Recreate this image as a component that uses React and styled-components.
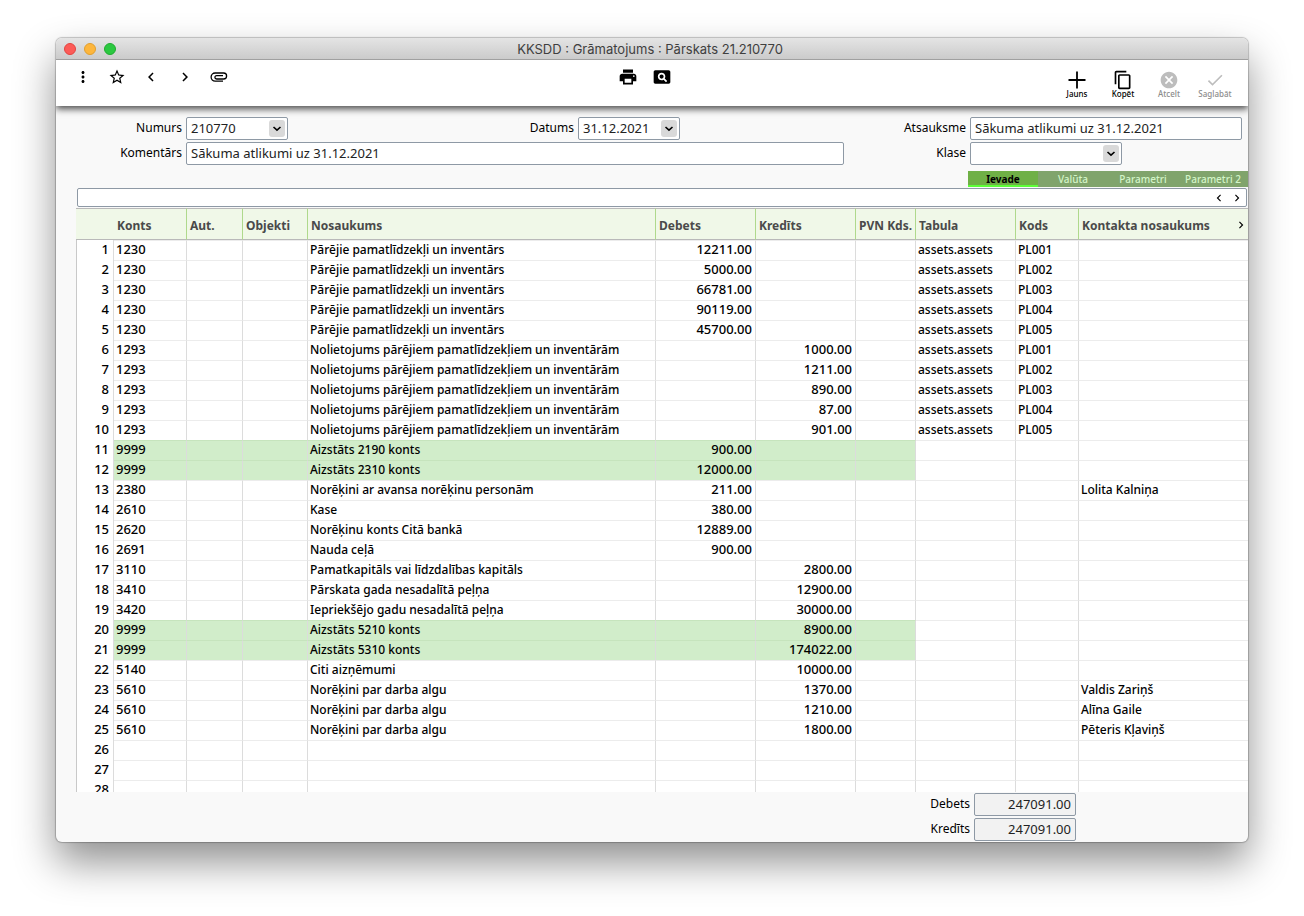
import React from "react";
import styled, { createGlobalStyle } from "styled-components";
import {
  MdMoreVert,
  MdStarBorder,
  MdChevronLeft,
  MdChevronRight,
  MdPrint,
  MdPageview,
  MdContentCopy,
  MdCancel,
  MdCheck,
} from "react-icons/md";

const Global = createGlobalStyle`
  * { box-sizing: border-box; }
  body { margin: 0; background: #fff; color: #000; }
  body, button, input, select { font-family: "Noto Sans", "Open Sans", sans-serif; font-size: 12px; }
`;

const Desktop = styled.div`
  height: 100vh;
  min-height: 480px;
  min-width: 1200px;
  padding: 38px 56px 74px;
  display: flex;
  overflow: hidden;
`;

const Window = styled.main`
  flex: 1;
  min-width: 0;
  display: flex;
  flex-direction: column;
  background: #f9f9f9;
  border-radius: 6px;
  overflow: hidden;
  box-shadow: 0 0 1px 1px rgba(0, 0, 0, 0.22), 0 20px 40px rgba(0, 0, 0, 0.44);
`;

const TitleBar = styled.header`
  flex: none;
  position: relative;
  z-index: 2;
  height: 22px;
  display: grid;
  grid-template-columns: 60px 1fr 72px;
  align-items: center;
  padding-left: 8px;
  background: linear-gradient(#e4e4e4, #cbcbcb);
  border-bottom: 1px solid #a0a0a0;
`;

const Lights = styled.div`
  display: flex;
  gap: 8px;
`;

const Light = styled.button`
  width: 12px;
  height: 12px;
  padding: 0;
  border-radius: 50%;
  border: 1px solid ${(p) => p.$edge};
  background: ${(p) => p.$fill};
`;

const Title = styled.h1`
  margin: 0;
  text-align: center;
  font: 400 13px/20px Inter, Roboto, sans-serif;
  color: #3f3f3f;
`;

const Toolbar = styled.nav`
  flex: none;
  position: relative;
  height: 46px;
  display: grid;
  grid-template-columns: 1fr auto 1fr;
  align-items: start;
  padding: 8px 10px 0 18px;
  background: #fff;
  box-shadow: 0 3px 7px rgba(0, 0, 0, 0.7);
`;

const ToolGroup = styled.div`
  display: flex;
  gap: 16px;
`;

const PrintGroup = styled(ToolGroup)`
  padding-right: 22px;
`;

const ActionGroup = styled(ToolGroup)`
  gap: 0;
  justify-content: flex-end;
  padding-top: 2px;
`;

const IconButton = styled.button`
  width: 18px;
  height: 18px;
  padding: 0;
  border: 0;
  background: none;
  display: flex;
  align-items: center;
  justify-content: center;
  color: #000;
  svg { flex: none; }
`;

const ActionButton = styled.button`
  width: 46px;
  padding: 0;
  border: 0;
  background: none;
  display: flex;
  flex-direction: column;
  align-items: center;
  color: ${(p) => (p.disabled ? "#8c8c8c" : "#000")};
  font-size: 8px;
  font-weight: 500;
  line-height: 8px;
  svg { color: ${(p) => (p.disabled ? "#bdbdbd" : "#000")}; }
`;

const Glyph = styled.span`
  height: 20px;
  display: flex;
  align-items: center;
`;

const Form = styled.form`
  flex: none;
  display: grid;
  grid-template-columns: 126px minmax(0, 1fr) 118px 272px;
  gap: 2px 4px;
  padding: 11px 6px 6px 0;
`;

const Label = styled.label`
  text-align: right;
  line-height: 21px;
`;

const Pair = styled.div`
  display: flex;
  gap: 4px;
  justify-content: space-between;
  padding-right: 164px;
`;

const Group = styled.div`
  display: flex;
  gap: 4px;
`;

const Field = styled.input`
  width: 100%;
  height: 23px;
  padding: 0 4px 2px;
  border: 1px solid #8e99a5;
  border-radius: 2px;
  background: ${(p) => (p.readOnly ? "#f2f2f2" : "#fff")};
  color: #222;
  font-size: 13px;
  text-align: ${(p) => p.$align || "left"};
`;

const ComboBox = styled.div`
  position: relative;
  width: ${(p) => p.$width};
  height: 23px;
`;

const Select = styled.select`
  appearance: none;
  width: 100%;
  height: 23px;
  padding: 0 20px 2px 4px;
  border: 1px solid #8e99a5;
  border-radius: 2px;
  background: #fff;
  color: #222;
  font-size: 13px;
`;

const ComboArrow = styled.span`
  position: absolute;
  top: 3px;
  right: 3px;
  width: 16px;
  height: 17px;
  display: flex;
  align-items: center;
  justify-content: center;
  border-radius: 3px;
  background: #d9d9d9;
  pointer-events: none;
`;

const Tabs = styled.div`
  flex: none;
  display: flex;
  justify-content: flex-end;
`;

const Tab = styled.button`
  width: 70px;
  height: 16px;
  padding: 2px 0 0;
  border: 0;
  border-bottom: 2px solid ${(p) => (p.$active ? "#5cff38" : "#80a46c")};
  background: ${(p) => (p.$active ? "#6fb046" : "#80a46c")};
  color: ${(p) => (p.$active ? "#000" : "#d3f5c8")};
  font-size: 10px;
  font-weight: ${(p) => (p.$active ? 700 : 500)};
  line-height: 12px;
  white-space: nowrap;
`;

const ScrollStrip = styled.div`
  flex: none;
  height: 19px;
  margin: 1px 1px 1px 21px;
  display: flex;
  justify-content: flex-end;
  align-items: center;
  border: 1px solid #8e99a5;
  border-radius: 2px;
  background: #fff;
`;

const Sheet = styled.div`
  flex: 1;
  min-height: 0;
  margin-left: 20px;
  overflow: hidden;
  background: #fff;
`;

const Table = styled.table`
  width: 100%;
  table-layout: fixed;
  border-spacing: 0;
`;

const HeadCell = styled.th`
  height: 32px;
  padding: 2px 0 0 3px;
  border: solid #b9b9b9;
  border-width: 1px 0;
  border-right: ${(p) => (p.$line ? "1px solid #afd98c" : "0")};
  background: #f0f8e8;
  color: #4a4a4a;
  font-size: 12px;
  font-weight: 700;
  text-align: left;
  white-space: nowrap;
  overflow: hidden;
`;

const HeadRow = styled.div`
  display: flex;
  align-items: center;
  justify-content: space-between;
`;

const Cell = styled.td`
  height: 20px;
  padding: 0 3px 2px 2px;
  border-right: 1px solid #dcdcdc;
  border-top: 1px solid ${(p) => (p.$mark ? "#c6e4bd" : "#ececec")};
  background: ${(p) => (p.$mark ? "#d1edca" : "#fff")};
  font-size: ${(p) => (p.$digits ? "13px" : "12px")};
  font-weight: 500;
  line-height: 17px;
  text-align: ${(p) => (p.$right ? "right" : "left")};
  white-space: nowrap;
  overflow: hidden;
  &:last-child { border-right: 0; }
`;

const RowNumber = styled.th`
  height: 20px;
  padding: 0 4px 2px 0;
  border: solid #c9c9c9;
  border-width: 0 1px;
  border-right-color: #dcdcdc;
  font-size: 13px;
  font-weight: 500;
  line-height: 18px;
  text-align: right;
`;

const Totals = styled.footer`
  flex: none;
  display: grid;
  grid-template-columns: 1fr 102px;
  gap: 2px 4px;
  padding: 1px 172px 1px 0;
`;

const columns = [
  ["", 38],
  ["Konts", 73],
  ["Aut.", 56],
  ["Objekti", 65],
  ["Nosaukums", 348],
  ["Debets", 100],
  ["Kredīts", 100],
  ["PVN Kds.", 60],
  ["Tabula", 100],
  ["Kods", 63],
  ["Kontakta nosaukums", null],
];

const ASSET = "Pārējie pamatlīdzekļi un inventārs";
const WEAR = "Nolietojums pārējiem pamatlīdzekļiem un inventārām";
const PAY = "Norēķini par darba algu";

// [account, name, debit, credit, asset code, contact]
const entries = [
  ["1230", ASSET, "12211.00", "", "PL001"],
  ["1230", ASSET, "5000.00", "", "PL002"],
  ["1230", ASSET, "66781.00", "", "PL003"],
  ["1230", ASSET, "90119.00", "", "PL004"],
  ["1230", ASSET, "45700.00", "", "PL005"],
  ["1293", WEAR, "", "1000.00", "PL001"],
  ["1293", WEAR, "", "1211.00", "PL002"],
  ["1293", WEAR, "", "890.00", "PL003"],
  ["1293", WEAR, "", "87.00", "PL004"],
  ["1293", WEAR, "", "901.00", "PL005"],
  ["9999", "Aizstāts 2190 konts", "900.00"],
  ["9999", "Aizstāts 2310 konts", "12000.00"],
  ["2380", "Norēķini ar avansa norēķinu personām", "211.00", "", "", "Lolita Kalniņa"],
  ["2610", "Kase", "380.00"],
  ["2620", "Norēķinu konts Citā bankā", "12889.00"],
  ["2691", "Nauda ceļā", "900.00"],
  ["3110", "Pamatkapitāls vai līdzdalības kapitāls", "", "2800.00"],
  ["3410", "Pārskata gada nesadalītā peļņa", "", "12900.00"],
  ["3420", "Iepriekšējo gadu nesadalītā peļņa", "", "30000.00"],
  ["9999", "Aizstāts 5210 konts", "", "8900.00"],
  ["9999", "Aizstāts 5310 konts", "", "174022.00"],
  ["5140", "Citi aizņēmumi", "", "10000.00"],
  ["5610", PAY, "", "1370.00", "", "Valdis Zariņš"],
  ["5610", PAY, "", "1210.00", "", "Alīna Gaile"],
  ["5610", PAY, "", "1800.00", "", "Pēteris Kļaviņš"],
  [],
  [],
  [],
];

function Combo({ id, value, width }) {
  return (
    <ComboBox $width={width}>
      <Select id={id} defaultValue={value}>
        <option value={value}>{value}</option>
      </Select>
      <ComboArrow>
        <svg width="10" height="10" viewBox="0 0 10 10" fill="none" stroke="#000" strokeWidth="1.6">
          <path d="M1.5 3 L5 6.2 L8.5 3" />
        </svg>
      </ComboArrow>
    </ComboBox>
  );
}

function EntryRow({ index, entry }) {
  const [account, name, debit, credit, code, contact] = entry;
  const mark = account === "9999";
  return (
    <tr>
      <RowNumber scope="row">{index}</RowNumber>
      <Cell $mark={mark} $digits>{account}</Cell>
      <Cell $mark={mark} />
      <Cell $mark={mark} />
      <Cell $mark={mark}>{name}</Cell>
      <Cell $mark={mark} $digits $right>{debit}</Cell>
      <Cell $mark={mark} $digits $right>{credit}</Cell>
      <Cell $mark={mark} />
      <Cell>{code ? "assets.assets" : ""}</Cell>
      <Cell>{code}</Cell>
      <Cell>{contact}</Cell>
    </tr>
  );
}

export default function App() {
  return (
    <>
      <Global />
      <Desktop>
        <Window>
          <TitleBar>
            <Lights>
              <Light aria-label="Aizvērt" $fill="#fc5b57" $edge="#e2443f" />
              <Light aria-label="Minimizēt" $fill="#fdb63c" $edge="#e09f2e" />
              <Light aria-label="Palielināt" $fill="#2bc840" $edge="#1fab2f" />
            </Lights>
            <Title>KKSDD : Grāmatojums : Pārskats 21.210770</Title>
          </TitleBar>

          <Toolbar>
            <ToolGroup>
              <IconButton aria-label="Izvēlne"><MdMoreVert size={18} /></IconButton>
              <IconButton aria-label="Izlase"><MdStarBorder size={18} /></IconButton>
              <IconButton aria-label="Iepriekšējais"><MdChevronLeft size={18} /></IconButton>
              <IconButton aria-label="Nākamais"><MdChevronRight size={18} /></IconButton>
              <IconButton aria-label="Pielikumi">
                <svg width="18" height="18" viewBox="0 0 18 18" fill="none" stroke="currentColor" strokeWidth="1.3">
                  <path d="M13 13.2H5.2A4.1 4.1 0 0 1 5.2 5H13.6A3 3 0 0 1 13.6 11H6.6A1.7 1.7 0 0 1 6.6 7.6H13" />
                </svg>
              </IconButton>
            </ToolGroup>
            <PrintGroup>
              <IconButton aria-label="Drukāt"><MdPrint size={20} /></IconButton>
              <IconButton aria-label="Priekšskatīt"><MdPageview size={20} /></IconButton>
            </PrintGroup>
            <ActionGroup>
              <ActionButton>
                <Glyph>
                  <svg width="18" height="18" viewBox="0 0 18 18" stroke="currentColor" strokeWidth="1.8">
                    <path d="M9 0.5V17.5M0.5 9H17.5" />
                  </svg>
                </Glyph>
                Jauns
              </ActionButton>
              <ActionButton><Glyph><MdContentCopy size={20} /></Glyph>Kopēt</ActionButton>
              <ActionButton disabled><Glyph><MdCancel size={20} /></Glyph>Atcelt</ActionButton>
              <ActionButton disabled><Glyph><MdCheck size={20} /></Glyph>Saglabāt</ActionButton>
            </ActionGroup>
          </Toolbar>

          <Form>
            <Label htmlFor="numurs">Numurs</Label>
            <Pair>
              <Combo id="numurs" value="210770" width="102px" />
              <Group>
                <Label htmlFor="datums">Datums</Label>
                <Combo id="datums" value="31.12.2021" width="102px" />
              </Group>
            </Pair>
            <Label htmlFor="atsauksme">Atsauksme</Label>
            <Field id="atsauksme" defaultValue="Sākuma atlikumi uz 31.12.2021" />
            <Label htmlFor="komentars">Komentārs</Label>
            <Field id="komentars" defaultValue="Sākuma atlikumi uz 31.12.2021" />
            <Label htmlFor="klase">Klase</Label>
            <Combo id="klase" value="" width="152px" />
          </Form>

          <Tabs>
            <Tab $active>Ievade</Tab>
            <Tab>Valūta</Tab>
            <Tab>Parametri</Tab>
            <Tab>Parametri 2</Tab>
          </Tabs>

          <ScrollStrip>
            <IconButton aria-label="Pa kreisi"><MdChevronLeft size={14} /></IconButton>
            <IconButton aria-label="Pa labi"><MdChevronRight size={14} /></IconButton>
          </ScrollStrip>

          <Sheet>
            <Table>
              <colgroup>
                {columns.map(([name, width]) => (
                  <col key={name} width={width || undefined} />
                ))}
              </colgroup>
              <thead>
                <tr>
                  {columns.map(([name], i) => (
                    <HeadCell key={name} scope="col" $line={i > 0 && i < columns.length - 1}>
                      {i === columns.length - 1 ? (
                        <HeadRow>
                          {name}
                          <MdChevronRight size={14} color="#000" />
                        </HeadRow>
                      ) : (
                        name
                      )}
                    </HeadCell>
                  ))}
                </tr>
              </thead>
              <tbody>
                {entries.map((entry, i) => (
                  <EntryRow key={i} index={i + 1} entry={entry} />
                ))}
              </tbody>
            </Table>
          </Sheet>

          <Totals>
            <Label htmlFor="debets">Debets</Label>
            <Field id="debets" readOnly defaultValue="247091.00" $align="right" />
            <Label htmlFor="kredits">Kredīts</Label>
            <Field id="kredits" readOnly defaultValue="247091.00" $align="right" />
          </Totals>
        </Window>
      </Desktop>
    </>
  );
}
